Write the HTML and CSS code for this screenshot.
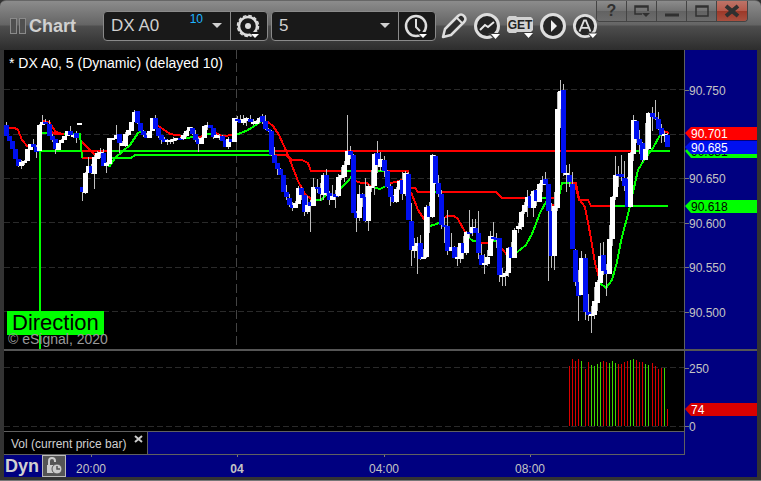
FILE: index.html
```html
<!DOCTYPE html>
<html lang="en">

<head>
    <meta charset="UTF-8">
    <meta name="viewport" content="width=device-width, initial-scale=1.0">
    <title>Chart</title>
    <link rel="stylesheet" href="styles.css">
</head>

<body>
    <div class="window">
        <header class="titlebar">
            <span class="grip"><i></i><i></i></span>
            <h1>Chart</h1>

            <div class="combo symbol">
                <select aria-label="Symbol">
                    <option>DX A0</option>
                </select>
                <span class="delay">10</span>
                <svg class="arrow" width="10" height="5" viewBox="0 0 10 5"><path d="M0 0H10L5 5Z" fill="#d0d0d0"/></svg>
                <button type="button" aria-label="Symbol settings">
                    <svg width="26" height="26" viewBox="0 0 26 26">
                        <circle cx="12" cy="13" r="9" fill="none" stroke="#dedede" stroke-width="2.5"/>
                        <circle cx="12" cy="13" r="10.5" fill="none" stroke="#dedede" stroke-width="1.5" stroke-dasharray="3.500 2"/>
                        <circle cx="12" cy="13" r="3" fill="#dedede"/>
                        <path d="M13 19H25L19 26Z" fill="#191919"/>
                        <path d="M15 21H23L19 25Z" fill="#fff"/>
                    </svg>
                </button>
            </div>

            <div class="combo interval">
                <select aria-label="Interval">
                    <option>5</option>
                </select>
                <svg class="arrow" width="10" height="5" viewBox="0 0 10 5"><path d="M0 0H10L5 5Z" fill="#d0d0d0"/></svg>
                <button type="button" aria-label="Time template">
                    <svg width="26" height="26" viewBox="0 0 26 26">
                        <circle cx="12" cy="13" r="10" fill="none" stroke="#dedede" stroke-width="2.5"/>
                        <path d="M12 6V14L16 18" fill="none" stroke="#dedede" stroke-width="2"/>
                        <path d="M12 19H25L19 26Z" fill="#191919"/>
                        <path d="M15 21H23L19 25Z" fill="#fff"/>
                    </svg>
                </button>
            </div>

            <nav class="tools">
                <button type="button" aria-label="Draw">
                    <svg width="26" height="26" viewBox="0 0 26 26">
                        <path d="M2 24L4 16L17 3Q20 0 23 3T23 9L10 22Z" fill="#2c2c2c" stroke="#dedede" stroke-width="2.5" stroke-linejoin="round"/>
                        <path d="M16 5L21 10" stroke="#dedede" stroke-width="2"/>
                    </svg>
                </button>
                <button type="button" aria-label="Studies">
                    <svg width="26" height="26" viewBox="0 0 26 26">
                        <circle cx="13" cy="13" r="11.500" fill="#252525" stroke="#dedede" stroke-width="3"/>
                        <path d="M6 17L11 12L14 14L20 9" fill="none" stroke="#e8e8e8" stroke-width="2"/>
                        <path d="M14 20H26V26H20Z" fill="#3a3a3a"/>
                        <path d="M17 21H26L21.500 26Z" fill="#fff"/>
                    </svg>
                </button>
                <button type="button" aria-label="Get">
                    <svg width="26" height="26" viewBox="0 0 26 26">
                        <path d="M2 3H9L10 4H24L26 6V17L24 19H10L9 20H2L0 18V5Z" fill="#d2d2d2"/>
                        <text x="13" y="16" class="get">GET</text>
                        <path d="M15 19H26V25H21Z" fill="#3a3a3a"/>
                        <path d="M17 20H26L21.500 25Z" fill="#fff"/>
                    </svg>
                </button>
                <button type="button" aria-label="Replay">
                    <svg width="26" height="26" viewBox="0 0 26 26">
                        <circle cx="13" cy="13" r="11.500" fill="#252525" stroke="#dedede" stroke-width="3"/>
                        <path d="M11 7L17 13L11 19Z" fill="#eee"/>
                    </svg>
                </button>
                <button type="button" class="alerts" aria-label="Alerts">
                    <svg width="26" height="26" viewBox="0 0 26 26">
                        <circle cx="13" cy="13" r="11.500" fill="#252525" stroke="#dedede" stroke-width="3"/>
                        <path d="M7 19L12 7H14L19 19M9 15H17" fill="none" stroke="#dedede" stroke-width="2"/>
                        <path d="M15 20H26V26H20Z" fill="#3a3a3a"/>
                        <path d="M17 21H26L21.500 26Z" fill="#fff"/>
                    </svg>
                </button>
            </nav>

            <div class="winbuttons">
                <button type="button">?</button>
                <button type="button" aria-label="Dock">
                    <svg width="16" height="14" viewBox="0 0 16 14"><path d="M8 10H1V2H14V7M1 3H14" fill="none" stroke="#303030" stroke-width="1.500"/><path d="M8 9H16L12 13Z" fill="#303030"/></svg>
                </button>
                <button type="button" aria-label="Minimize">
                    <svg width="16" height="14" viewBox="0 0 16 14"><path d="M1 11H15" stroke="#303030" stroke-width="3"/></svg>
                </button>
                <button type="button" aria-label="Maximize">
                    <svg width="16" height="14" viewBox="0 0 16 14"><path d="M2 2H14V12H2ZM2 3H14" fill="none" stroke="#303030" stroke-width="1.500"/></svg>
                </button>
                <button type="button" class="close" aria-label="Close">
                    <svg width="16" height="14" viewBox="0 0 16 14"><path d="M2 2L14 12M14 2L2 12" stroke="#303030" stroke-width="4"/></svg>
                </button>
            </div>
        </header>

        <main class="chart">
            <section class="pane">
                <svg id="price" class="plot" viewBox="4 50 680 299"></svg>
                <p class="caption">* DX A0, 5 (Dynamic) (delayed 10)</p>
                <div class="direction">Direction</div>
                <p class="copyright">© eSignal, 2020</p>
            </section>
            <svg id="priceAxis" class="axis" viewBox="685 50 72 299"></svg>

            <section class="pane split">
                <svg id="volume" class="plot" viewBox="4 351 680 80"></svg>
            </section>
            <svg id="volumeAxis" class="axis split" viewBox="685 351 72 80"></svg>

            <div class="tabs">
                <div class="tab">
                    <span>Vol (current price bar)</span>
                    <button type="button" aria-label="Close study">
                        <svg width="9" height="8" viewBox="0 0 9 8"><path d="M1 1L8 7M8 1L1 7" stroke="#ccc" stroke-width="2"/></svg>
                    </button>
                </div>
            </div>
            <div class="axis"></div>
        </main>

        <footer class="timebar">
            <b>Dyn</b>
            <button type="button" aria-label="Lock time">
                <svg width="20" height="20" viewBox="0 0 20 20">
                    <path d="M5 9V5Q5 2 8 2T11 5V6" fill="none" stroke="#ccc" stroke-width="2"/>
                    <rect x="3" y="9" width="9" height="8" fill="#ccc"/>
                    <circle cx="13" cy="13" r="5" fill="#ccc" stroke="#555"/>
                    <path d="M13 10V13H16" fill="none" stroke="#555" stroke-width="1.500"/>
                </svg>
            </button>
            <svg id="times" viewBox="66 455 691 22"></svg>
        </footer>
    </div>

    <script src="chart.js"></script>
</body>

</html>
```

FILE: styles.css
```css
* {
    box-sizing: border-box;
}

body {
    margin: 0;
    background-color: #333;
    font-family: "Liberation Sans", Arial, sans-serif;
    color: #d0d0d0;
}

h1, p {
    margin: 0;
    font-weight: normal;
}

button {
    display: flex;
    align-items: center;
    justify-content: center;
    padding: 0;
    border: none;
    background: none;
    font-family: inherit;
    cursor: pointer;
}

svg {
    display: block;
}

.window {
    padding: 0 4px 3px 4px;
    background-color: #333;
    border-bottom: 1px solid #777;
    overflow: hidden;
}

/* title bar */

.titlebar {
    position: relative;
    display: flex;
    align-items: center;
    height: 50px;
    margin: 0 -4px;
    padding-left: 10px;
    border-top: 1px solid #666;
    border-radius: 6px 6px 0 0;
    background: linear-gradient(#8c8c8c, #646464 24px, #4e4e4e 25px, #2d2d2d);
}

.grip {
    display: flex;
    gap: 2px;
    margin-right: 3px;
}

.grip i {
    width: 7px;
    height: 16px;
    border: 1px solid #8a8a8a;
    background-color: #505050;
}

h1 {
    width: 74px;
    font-size: 18px;
    font-weight: bold;
    line-height: 20px;
    color: #d0d0d0;
}

.combo {
    position: relative;
    display: flex;
    height: 30px;
    border: 1px solid #8a8a8a;
    border-radius: 4px;
    background-color: #191919;
}

.combo select {
    flex: 1;
    appearance: none;
    padding: 0 7px;
    border: none;
    background: none;
    font-family: inherit;
    font-size: 17px;
    color: #d0d0d0;
}

.combo button {
    width: 37px;
    border-left: 1px solid #8a8a8a;
}

.symbol {
    width: 165px;
    margin-right: 3px;
}

.interval {
    width: 165px;
    margin-right: 5px;
}

.arrow {
    position: absolute;
    right: 45px;
    top: 11px;
}

.delay {
    position: absolute;
    right: 64px;
    top: 0;
    font-size: 12px;
    line-height: 14px;
    color: #1fb4ff;
}

.tools {
    display: flex;
    gap: 7px;
}

.alerts {
    width: 24px;
    justify-content: flex-start;
    overflow: hidden;
}

.get {
    font-size: 12px;
    font-weight: bold;
    text-anchor: middle;
    fill: #222;
}

.winbuttons {
    position: absolute;
    top: 0;
    right: 13px;
    display: flex;
    border: 1px solid #444;
    border-top: none;
    border-radius: 0 0 4px 4px;
    overflow: hidden;
}

.winbuttons button {
    width: 30px;
    height: 20px;
    border-right: 1px solid #444;
    background: linear-gradient(#8c8c8c, #727272 50%, #626262 51%, #6c6c6c);
    font-size: 16px;
    font-weight: bold;
    color: #303030;
}

.winbuttons .close {
    border-right: none;
    background: linear-gradient(#bd7468, #b5584a 50%, #9c3828 51%, #a85040);
}

/* chart area */

.chart {
    display: grid;
    grid-template-columns: 1fr 73px;
    background-color: #000;
}

.pane {
    position: relative;
}

.plot {
    width: 100%;
    shape-rendering: crispEdges;
}

.axis {
    width: 100%;
    height: 100%;
    border-left: 1px solid #606060;
    background-color: #000080;
}

.split {
    border-top: 2px solid #555;
}

/* the lowest label hangs over the tab row */
#volumeAxis {
    position: relative;
    z-index: 1;
    overflow: visible;
}

.axis text, #times text {
    font-size: 12px;
    fill: #c4c4c4;
}

#times .day {
    font-weight: bold;
}

.caption {
    position: absolute;
    top: 5px;
    left: 5px;
    font-size: 14px;
    line-height: 16px;
    color: #fff;
}

.direction {
    position: absolute;
    bottom: 14px;
    left: 3px;
    padding: 0 5px;
    background-color: #0f0;
    font-size: 22px;
    line-height: 24px;
    color: #000;
}

.copyright {
    position: absolute;
    bottom: 2px;
    left: 4px;
    font-size: 14px;
    line-height: 16px;
    color: #999;
}

.tabs {
    border: 1px solid #606060;
    border-width: 1px 0;
    background-color: #000080;
}

.tab {
    display: flex;
    width: 144px;
    height: 22px;
    padding-left: 7px;
    border-right: 1px solid #606060;
    background-color: #000;
    font-size: 12px;
    line-height: 24px;
}

.tab button {
    width: 9px;
    height: 14px;
    margin: 0 4px 0 auto;
}

.timebar {
    display: grid;
    grid-template-columns: 38px 24px 1fr;
    align-items: center;
    background-color: #000080;
}

.timebar b {
    padding-left: 1px;
    font-size: 18px;
    line-height: 20px;
}

.timebar button {
    height: 22px;
    border: 1px solid #bbb;
    background-color: #555;
}
```

FILE: chart.js
```js
var UP = "#ffffff";
var DOWN = "#0010f0";
var RED = "#ff0000";
var GREEN = "#00ff00";

// x, high, body top, body bottom, low, up
var candles = [
    [6, 122, 125, 136, 136, 0], [9, 136, 136, 141, 141, 0], [12, 141, 141, 149, 149, 0],
    [15, 149, 149, 159, 159, 0], [18, 159, 159, 166, 167, 0], [21, 160, 162, 166, 169, 1],
    [24, 160, 161, 163, 165, 1], [27, 149, 149, 161, 161, 1], [30, 144, 144, 150, 150, 1],
    [33, 139, 144, 147, 147, 0], [36, 145, 147, 152, 158, 0], [39, 124, 125, 151, 151, 1],
    [42, 115, 122, 125, 125, 1], [45, 119, 122, 124, 124, 0], [49, 120, 124, 136, 136, 0],
    [52, 134, 136, 140, 142, 0], [55, 139, 139, 149, 154, 0], [58, 143, 143, 150, 150, 1],
    [61, 139, 140, 143, 143, 1], [64, 136, 136, 140, 140, 1], [67, 131, 131, 136, 136, 1],
    [70, 126, 131, 135, 135, 0], [73, 134, 135, 137, 138, 1], [76, 131, 133, 138, 143, 0],
    [79, 123, 123, 125, 125, 1], [82, 187, 187, 192, 201, 0], [85, 172, 173, 193, 194, 1],
    [88, 157, 166, 173, 173, 1], [91, 164, 166, 173, 174, 0], [94, 155, 157, 174, 189, 1],
    [97, 151, 153, 159, 159, 1], [100, 148, 152, 154, 158, 1], [103, 149, 153, 166, 166, 0],
    [106, 162, 163, 166, 173, 1], [109, 138, 138, 164, 164, 1], [112, 138, 138, 140, 140, 1],
    [116, 125, 135, 139, 139, 1], [119, 134, 134, 143, 153, 0], [122, 141, 143, 146, 146, 1],
    [125, 132, 134, 146, 147, 1], [128, 130, 130, 135, 136, 1], [131, 122, 122, 131, 131, 1],
    [134, 110, 112, 122, 122, 1], [137, 111, 111, 123, 124, 0], [140, 123, 123, 131, 131, 0],
    [143, 130, 131, 135, 137, 0], [146, 133, 135, 138, 138, 0], [149, 131, 131, 138, 138, 1],
    [152, 118, 118, 131, 131, 1], [155, 115, 118, 129, 129, 0], [158, 128, 128, 136, 138, 0],
    [161, 135, 135, 140, 144, 0], [164, 137, 139, 142, 142, 0], [167, 139, 140, 142, 145, 1],
    [170, 139, 140, 142, 144, 1], [173, 137, 139, 141, 144, 1], [176, 138, 138, 140, 141, 1],
    [180, 137, 138, 140, 140, 0], [183, 133, 135, 139, 140, 1], [186, 130, 131, 136, 137, 1],
    [189, 127, 127, 131, 131, 1], [192, 127, 128, 134, 135, 0], [195, 130, 134, 140, 142, 0],
    [198, 137, 139, 144, 152, 0], [201, 137, 138, 144, 144, 1], [204, 125, 126, 138, 138, 1],
    [207, 122, 125, 127, 130, 1], [210, 125, 125, 128, 128, 0], [213, 128, 128, 137, 139, 0],
    [216, 134, 135, 138, 138, 1], [219, 134, 136, 138, 140, 1], [222, 135, 136, 141, 141, 0],
    [225, 140, 140, 147, 147, 0], [228, 137, 139, 147, 149, 1], [231, 139, 139, 142, 142, 0],
    [234, 118, 118, 142, 142, 1], [237, 116, 119, 121, 122, 0], [240, 115, 120, 123, 123, 0],
    [243, 115, 119, 123, 125, 1], [246, 117, 118, 121, 126, 1], [250, 115, 119, 122, 122, 0],
    [253, 119, 122, 124, 125, 1], [256, 120, 121, 124, 124, 1], [259, 117, 118, 122, 123, 1],
    [262, 114, 116, 122, 124, 0], [265, 115, 121, 129, 130, 0], [268, 128, 129, 131, 132, 0],
    [271, 130, 131, 155, 156, 0], [274, 147, 155, 163, 163, 0], [277, 163, 163, 169, 175, 0],
    [280, 168, 169, 175, 175, 0], [283, 175, 175, 192, 192, 0], [286, 185, 192, 197, 200, 0],
    [289, 194, 198, 205, 207, 0], [292, 202, 205, 208, 211, 0], [295, 201, 203, 208, 208, 1],
    [298, 186, 188, 204, 204, 1], [301, 187, 188, 195, 200, 0], [304, 195, 195, 212, 216, 0],
    [307, 196, 205, 212, 214, 1], [310, 200, 202, 206, 232, 0], [313, 178, 187, 206, 206, 1],
    [317, 179, 187, 189, 193, 0], [320, 183, 188, 194, 201, 0], [323, 173, 175, 195, 200, 1],
    [326, 169, 175, 193, 196, 0], [329, 191, 193, 200, 205, 0], [332, 185, 196, 200, 200, 1],
    [335, 190, 194, 197, 208, 0], [338, 174, 177, 196, 197, 1], [341, 167, 175, 178, 180, 1],
    [344, 161, 165, 177, 182, 1], [347, 115, 151, 165, 165, 1], [350, 146, 151, 155, 159, 0],
    [353, 154, 155, 213, 213, 0], [356, 211, 213, 218, 232, 0], [359, 185, 194, 218, 221, 1],
    [362, 193, 194, 198, 207, 0], [365, 178, 197, 221, 222, 0], [368, 184, 186, 221, 231, 1],
    [371, 170, 186, 188, 192, 1], [374, 153, 154, 186, 195, 1], [377, 141, 153, 165, 173, 0],
    [380, 152, 159, 167, 171, 1], [384, 156, 160, 171, 177, 0], [387, 170, 171, 187, 188, 0],
    [390, 184, 186, 197, 206, 0], [393, 195, 196, 202, 203, 0], [396, 187, 189, 202, 203, 1],
    [399, 180, 181, 189, 190, 1], [402, 172, 180, 194, 200, 0], [405, 171, 173, 194, 196, 1],
    [408, 172, 174, 220, 220, 0], [411, 203, 221, 250, 266, 0], [414, 238, 246, 251, 258, 1],
    [417, 237, 243, 246, 274, 1], [420, 235, 243, 259, 260, 0], [423, 249, 257, 259, 259, 1],
    [426, 205, 207, 257, 258, 1], [429, 202, 206, 217, 233, 0], [432, 154, 155, 217, 218, 1],
    [435, 155, 156, 183, 184, 0], [438, 175, 183, 194, 197, 0], [441, 190, 194, 225, 229, 0],
    [444, 217, 225, 227, 243, 0], [447, 210, 226, 251, 255, 0], [451, 233, 247, 251, 251, 1],
    [454, 246, 247, 258, 258, 0], [457, 247, 257, 259, 266, 1], [460, 243, 243, 259, 263, 1],
    [463, 236, 243, 253, 259, 0], [466, 231, 232, 253, 255, 1], [469, 210, 232, 234, 238, 0],
    [472, 219, 227, 233, 236, 1], [475, 219, 228, 233, 233, 0], [478, 211, 233, 253, 259, 0],
    [481, 244, 255, 265, 265, 0], [484, 254, 263, 265, 274, 1], [487, 250, 257, 264, 266, 1],
    [490, 231, 236, 256, 256, 1], [493, 222, 237, 239, 241, 0], [496, 233, 238, 240, 248, 0],
    [499, 238, 238, 275, 282, 0], [502, 268, 275, 277, 286, 1], [505, 271, 273, 276, 286, 1],
    [508, 247, 248, 273, 277, 1], [511, 242, 247, 258, 258, 0], [514, 228, 230, 258, 258, 1],
    [518, 223, 226, 229, 233, 1], [521, 211, 212, 227, 230, 1], [524, 202, 205, 212, 214, 1],
    [527, 190, 197, 206, 217, 1], [530, 194, 196, 208, 208, 0], [533, 190, 191, 208, 217, 1],
    [536, 189, 190, 201, 206, 0], [539, 183, 184, 202, 202, 1], [542, 176, 180, 185, 192, 1],
    [545, 172, 179, 184, 185, 0], [548, 184, 184, 211, 281, 0], [551, 203, 211, 256, 268, 0],
    [554, 192, 206, 256, 270, 1], [557, 92, 109, 208, 211, 1], [560, 80, 91, 109, 128, 1],
    [563, 84, 90, 173, 176, 0], [566, 165, 173, 175, 192, 1], [569, 164, 175, 182, 187, 0],
    [572, 172, 184, 249, 249, 0], [575, 249, 250, 282, 286, 0], [578, 270, 282, 296, 321, 0],
    [581, 251, 258, 295, 295, 1], [585, 254, 258, 312, 320, 0], [588, 294, 312, 315, 321, 0],
    [591, 306, 314, 316, 333, 1], [594, 287, 301, 315, 319, 1], [597, 280, 282, 303, 311, 1],
    [600, 243, 256, 283, 283, 1], [603, 242, 255, 271, 275, 0], [606, 264, 270, 274, 296, 0],
    [609, 225, 239, 274, 274, 1], [612, 196, 197, 239, 246, 1], [615, 156, 175, 197, 200, 1],
    [618, 166, 174, 176, 187, 0], [621, 155, 174, 177, 181, 0], [624, 161, 178, 186, 191, 0],
    [627, 177, 179, 207, 207, 0], [630, 152, 153, 207, 207, 1], [633, 115, 120, 154, 161, 1],
    [636, 120, 121, 139, 143, 0], [639, 130, 139, 145, 154, 0], [642, 142, 143, 160, 162, 0],
    [645, 123, 149, 160, 160, 1], [648, 112, 113, 149, 150, 1], [652, 107, 113, 117, 131, 0],
    [655, 100, 117, 119, 120, 0], [658, 112, 119, 129, 130, 0], [661, 124, 128, 135, 143, 0],
    [664, 131, 134, 136, 142, 1], [667, 133, 135, 147, 147, 0]
];

// pivot level, daily line and moving average
var redLines = [
    "82,151 107,151", "275,151 632,151",
    "52,132 55,134 64,134", "82,158 97,158",
    "270,155 286,155 292,160 302,160 308,163 311,171 408,171 410,188 415,188 418,192 496,192 502,198 554,198",
    "575,183 579,200 588,200 591,206 614,206",
    "9,128 15,128 18,130 22,140 28,147", "43,121 49,122 56,132 63,134", "82,142 98,158",
    "158,126 163,129 170,134 183,136", "196,137 206,136", "216,133 222,136 234,135",
    "264,121 268,122 273,126 279,135 288,155 298,181 305,194 311,199",
    "356,181 361,183 367,183 371,187", "390,183 396,182 404,179", "411,192 418,210 426,222",
    "445,217 448,216 454,216 458,219 465,232", "481,243 490,243", "499,245 507,255",
    "551,204 555,206", "570,183 576,183 579,199 585,207 590,233 595,263 600,281", "664,131 669,133"
];
var greenLines = [
    "40,151 82,151", "108,151 272,151", "632,151 670,151", "40,151 40,349",
    "41,133 48,133", "64,134 80,134 82,158", "109,158 131,158 135,155 271,155",
    "346,171 352,171", "377,171 384,171", "434,192 438,192", "541,198 548,198", "614,206 668,206",
    "109,167 115,158 130,145 138,133 142,131", "186,138 194,137", "207,134 213,134",
    "235,135 241,133 248,130 262,121", "312,200 321,200 327,194", "340,189 347,182 353,175",
    "373,187 380,189 386,186", "429,226 434,225 441,222", "468,237 473,241 478,241", "491,241 497,241",
    "516,253 526,245 532,234 540,213 547,200", "559,196 562,183 571,183",
    "600,283 606,288 612,280 617,262 621,241 629,210 638,170 644,160 653,148 660,135"
];

// x, top, rising
var volumes = [
    [569, 366, 0], [572, 359, 0], [575, 361, 0], [578, 359, 0], [581, 361, 1], [585, 369, 0],
    [588, 362, 0], [591, 365, 1], [594, 366, 1], [597, 364, 1], [600, 362, 1], [603, 361, 0],
    [606, 362, 0], [609, 363, 1], [612, 361, 1], [615, 363, 1], [618, 364, 0], [621, 364, 0],
    [624, 362, 0], [627, 361, 0], [630, 360, 1], [633, 359, 1], [636, 360, 0], [639, 362, 0],
    [642, 362, 0], [645, 364, 1], [648, 365, 1], [652, 363, 0], [655, 366, 0], [658, 369, 0],
    [661, 368, 0], [664, 368, 1], [667, 409, 0]
];

function add(id, tag, attrs, text) {
    var el = document.createElementNS("http://www.w3.org/2000/svg", tag);
    for (var key in attrs) {
        el.setAttribute(key, attrs[key]);
    }
    if (text) {
        el.textContent = text;
    }
    document.getElementById(id).appendChild(el);
}

function rect(id, x, y, width, height, fill) {
    add(id, "rect", { x: x, y: y, width: width, height: height, fill: fill });
}

function gridLine(id, d) {
    add(id, "path", { d: d, stroke: "#2a2a2a", "stroke-dasharray": "6 3", fill: "none" });
}

function lines(list, color) {
    for (var i = 0; i < list.length; i++) {
        add("price", "polyline", { points: list[i], fill: "none", stroke: color, "stroke-width": 2 });
    }
}

function tick(id, y, label) {
    rect(id, 685, y, 4, 1, "#777");
    add(id, "text", { x: 689, y: y + 5 }, label);
}

function tag(id, y, label, fill, color) {
    add(id, "path", { d: "M685 " + y + "l6 -6h66v13h-66z", fill: fill });
    add(id, "text", { x: 691, y: y + 5, style: "fill:" + color }, label);
}

function drawPrice() {
    [89, 134, 178, 222, 267, 311].forEach(function (y) {
        gridLine("price", "M4 " + (y + 0.5) + "H684");
    });
    add("price", "path", { d: "M236.5 50V345", stroke: "#444", "stroke-dasharray": "9 4" });
    lines(redLines, RED);
    lines(greenLines, GREEN);
    candles.forEach(function (c) {
        rect("price", c[0], c[1], 1, c[4] - c[1], "#c0c0c0");
    });
    candles.forEach(function (c) {
        rect("price", c[0] - 2, c[2], 5, c[3] - c[2], c[5] ? UP : DOWN);
    });
}

function drawVolume() {
    gridLine("volume", "M4 367.5H684");
    gridLine("volume", "M4 426.5H684");
    volumes.forEach(function (v) {
        rect("volume", v[0], v[1], 1, 426 - v[1], v[2] ? "#40d800" : "#d80000");
    });
}

function drawAxes() {
    tick("priceAxis", 90, "90.750");
    tick("priceAxis", 178, "90.650");
    tick("priceAxis", 223, "90.600");
    tick("priceAxis", 267, "90.550");
    tick("priceAxis", 312, "90.500");
    tag("priceAxis", 151, "90.681", GREEN, "#000");
    tag("priceAxis", 133, "90.701", RED, "#fff");
    tag("priceAxis", 147, "90.685", DOWN, "#fff");
    tag("priceAxis", 206, "90.618", GREEN, "#000");
    tick("volumeAxis", 368, "250");
    tick("volumeAxis", 426, "0");
    tag("volumeAxis", 409, "74", "#d80000", "#fff");

    [[91, "20:00"], [237, "04"], [384, "04:00"], [530, "08:00"]].forEach(function (t) {
        rect("times", t[0], 455, 1, 2, "#777");
        add("times", "text", { x: t[0], y: 473, "text-anchor": "middle", "class": t[1] == "04" ? "day" : "hour" }, t[1]);
    });
}

drawPrice();
drawVolume();
drawAxes();
```
